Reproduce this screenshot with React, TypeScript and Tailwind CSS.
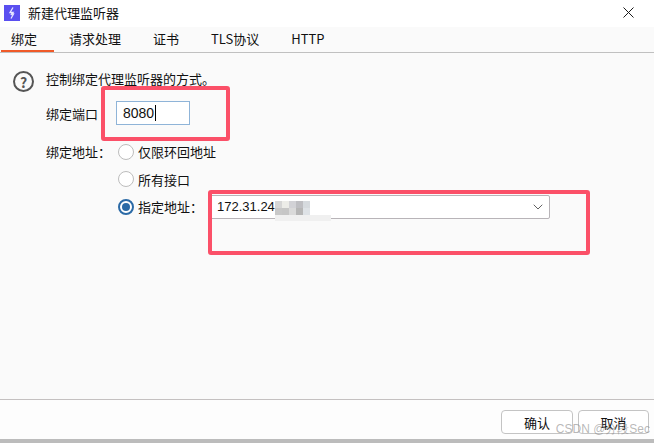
import { ChevronDown } from "lucide-react";

const tabs = ["绑定", "请求处理", "证书", "TLS协议", "HTTP"];
const font = "font-['Noto_Sans_CJK_SC','Liberation_Sans',sans-serif]";
const mosaic = ["#d6d6d6", "#ecece8", "#d2d2d6", "#bebec2", "#d6dade", "#c8c8c8", "#c6c6c6", "#dadada", "#b6b6b6", "#dee2e6"];

function Radio({ label, checked }: { label: string; checked?: boolean }) {
  return (
    <div className="flex h-[27.5px] items-center gap-[4px]">
      <span
        className={`flex size-[16px] items-center justify-center rounded-full bg-white ${
          checked ? "border-2 border-[#2b6aa6]" : "border-[1.5px] border-[#bdbdbd]"
        }`}
      >
        {checked && <span className="size-[8px] rounded-full bg-[#2b6aa6]" />}
      </span>
      <span>{label}</span>
    </div>
  );
}

export default function App() {
  return (
    <div className={`relative flex h-[443px] w-[654px] flex-col overflow-hidden bg-[#fafafa] text-[13px] leading-none text-[#111] ${font}`}>
      {/* title bar */}
      <div className="flex h-[27px] items-center bg-white pb-[2px] pl-[4px] pr-[20px]">
        <svg width="16" height="16" viewBox="0 0 16 16">
          <rect width="16" height="16" fill="#5a4ff0" />
          <path d="M9 2.5 L6 7.5 L9 7.5 L6.8 10 M7.2 9 L9.5 9 L7 13.5" stroke="#e8e8ff" strokeWidth="1.3" fill="none" />
        </svg>
        <span className="ml-[8px]">新建代理监听器</span>
        <svg className="ml-auto" width="11" height="11" viewBox="0 0 11 11">
          <path d="M0.5 0.5 L10.5 10.5 M10.5 0.5 L0.5 10.5" stroke="#1a1a1a" strokeWidth="1" />
        </svg>
      </div>

      {/* tabs */}
      <div className="flex h-[26px] gap-[32px] border-b-[1px] border-[#c0c0c0] pl-[11px]">
        {tabs.map((t, i) => (
          <div key={t} className="relative flex h-[25px] items-center pb-[2px]">
            {t}
            {i === 0 && <span className="absolute bottom-0 left-[-10px] right-[-17px] h-[2px] bg-[#f05a28]" />}
          </div>
        ))}
      </div>

      {/* body */}
      <div className="flex-1 pl-[13px] pt-[18px]">
        <div className="flex items-start gap-[12px]">
          <span className="flex size-[21px] items-center justify-center rounded-full border-[2px] border-[#555] text-[14px] font-bold text-[#555]">?</span>
          <span className="pt-[1px]">控制绑定代理监听器的方式。</span>
        </div>
        <div className="mt-[9px] flex items-center pl-[33px]">
          <span className="w-[70px]">绑定端口</span>
          <div className="flex h-[24px] w-[74px] items-center border border-[#8fb4d8] bg-white pl-[6px] font-['Liberation_Sans'] text-[14px]">
            8080<span className="ml-[1px] h-[16px] w-px bg-black" />
          </div>
        </div>
        <div className="mt-[13px] flex pl-[33px]">
          <span className="flex h-[27.5px] w-[72px] items-center">绑定地址：</span>
          <div className="flex flex-col">
            <Radio label="仅限环回地址" />
            <Radio label="所有接口" />
            <div className="flex items-center">
              <Radio label="指定地址：" checked />
              <div className="ml-[7px] flex h-[24px] w-[340px] items-center justify-between rounded-[2px] border border-[#b8b4b8] bg-white pl-[6px] pr-[3px] font-['Liberation_Sans'] text-[13px]">
                <span>172.31.24</span>
                <ChevronDown size={16} strokeWidth={1.4} className="text-[#555]" />
              </div>
            </div>
          </div>
        </div>
      </div>

      {/* footer */}
      <div className="flex h-[40px] justify-end gap-[5px] border-t border-[#c4c0c0] bg-[#fdfdfd] pr-[5px] pt-[10px]">
        <button className="h-[24px] w-[72px] rounded-[4px] border border-[#c4c4c4] bg-white">确认</button>
        <button className="h-[24px] w-[71px] rounded-[4px] border border-[#c4c4c4] bg-white">取消</button>
      </div>
      <div className="h-[4px] bg-[#bcbcbc]" />

      {/* red annotation boxes */}
      <div className="absolute left-[101px] top-[86px] h-[55px] w-[129px] rounded-[3px] border-[4px] border-[#fb5068]" />
      <div className="absolute left-[208px] top-[190px] h-[65px] w-[382px] rounded-[3px] border-[4px] border-[#fb5068]" />

      {/* mosaic over the address */}
      <div className="absolute left-[275px] top-[201px] grid grid-cols-5 blur-[0.6px]">
        {mosaic.map((c, i) => (
          <span key={i} className="h-[7px] w-[7px]" style={{ backgroundColor: c }} />
        ))}
      </div>
      <div className="absolute left-[275px] top-[215px] h-[6px] w-[56px] bg-[#f0f0f0]" />

      {/* watermark */}
      <span className="absolute bottom-[8px] right-[4px] font-['Liberation_Sans'] text-[12px] text-[#8a8a8a]/60">CSDN @分段Sec</span>
    </div>
  );
}
